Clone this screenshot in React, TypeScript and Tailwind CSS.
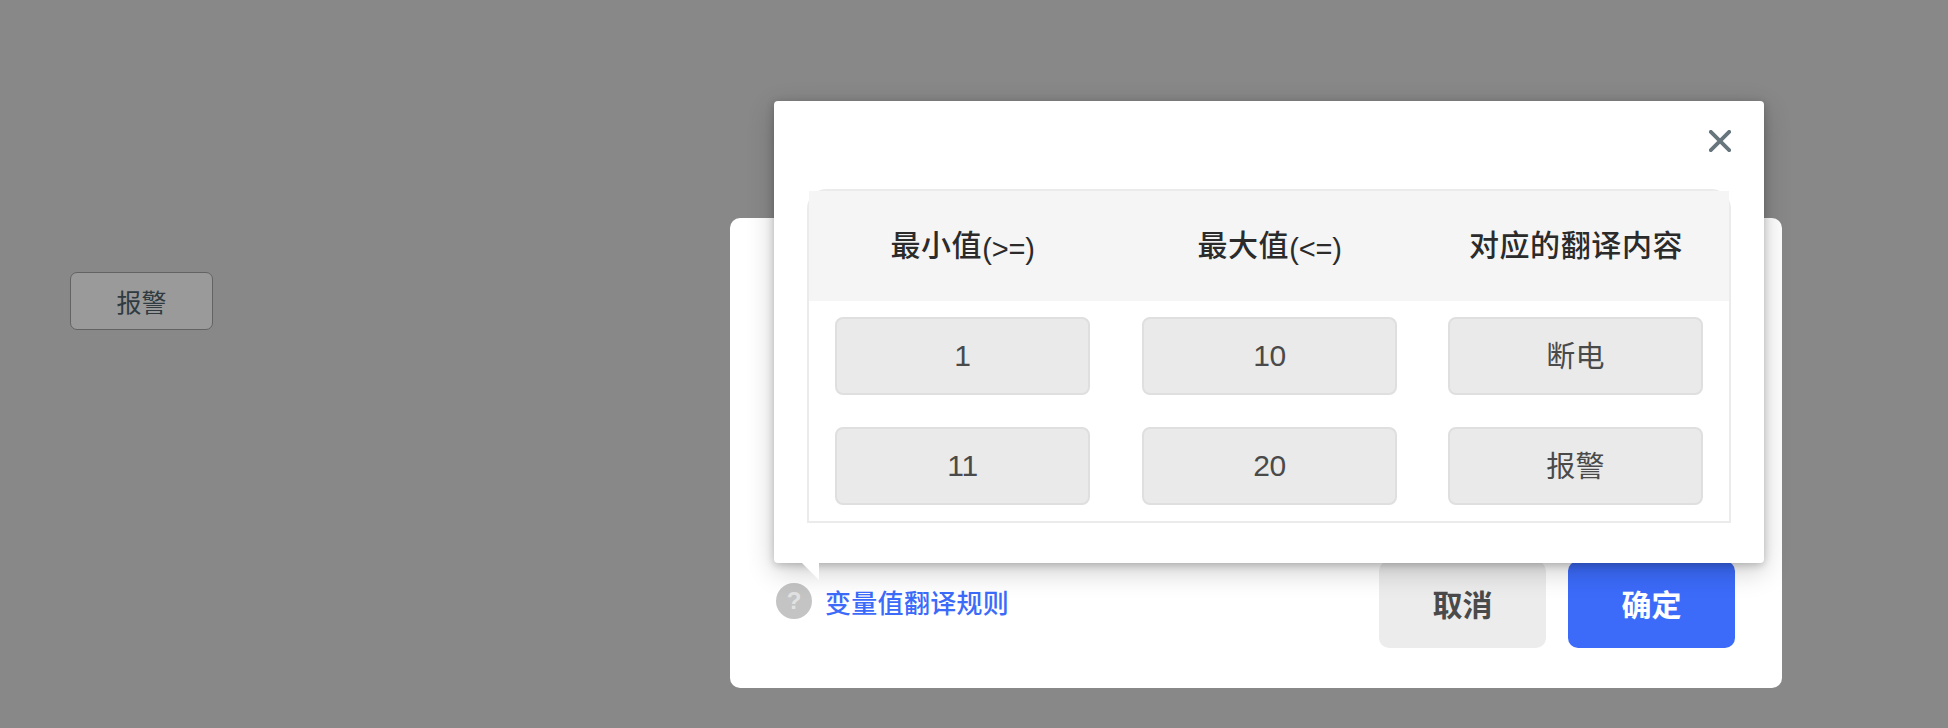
const FONT = "font-['Liberation_Sans','Noto_Sans_CJK_SC',sans-serif]";

const columns = [
  { label: "最小值", suffix: "(>=)" },
  { label: "最大值", suffix: "(<=)" },
  { label: "对应的翻译内容", suffix: "" },
];

const rows = [
  ["1", "10", "断电"],
  ["11", "20", "报警"],
];

function CloseIcon() {
  return (
    <svg className="h-[22px] w-[22px]" viewBox="0 0 22 22" fill="none" stroke="#67757c" strokeWidth={3.8}>
      <path d="M0.5 0.5L21.5 21.5M21.5 0.5L0.5 21.5" />
    </svg>
  );
}

function RulePopover() {
  return (
    <div className="absolute bottom-[125px] left-[44px] h-[462px] w-[990px] rounded-[4px] bg-white px-[33px] shadow-[0_2px_8px_rgba(0,0,0,0.22),0_8px_28px_rgba(0,0,0,0.2)]">
      <div className="flex h-[88px] items-start justify-end pt-[29px]">
        <button type="button" aria-label="关闭">
          <CloseIcon />
        </button>
      </div>

      <div className="rounded-t-[20px] border-2 border-[#ebebeb]">
        <div className="grid h-[110px] grid-cols-[307px_307px_306px] items-center bg-[#f5f5f5] text-center text-[30px] leading-none text-[#2b2b2b]">
          {columns.map((column) => (
            <div key={column.label} className="flex items-center justify-center font-medium">
              <span className="tracking-[0.6px]">{column.label}</span>
              {column.suffix && (
                <span className="pt-1.5 text-[29px] font-normal tracking-[-0.2px]">{column.suffix}</span>
              )}
            </div>
          ))}
        </div>
        {rows.map((row) => (
          <div key={row[0]} className="grid h-[110px] grid-cols-[307px_307px_305px] place-items-center">
            {row.map((value) => (
              <div
                key={value}
                className={`flex h-[78px] w-[255px] items-center justify-center rounded-[8px] border-2 border-[#dfdfdf] bg-[#eaeaea] leading-none text-[#4a4a4a] ${
                  /\d/.test(value) ? "text-[30px] tracking-[-0.4px]" : "pt-[3px] text-[29px] tracking-[0.3px]"
                }`}
              >
                {value}
              </div>
            ))}
          </div>
        ))}
      </div>

      <svg className="absolute top-full left-[28px] h-[17px] w-[17px]" viewBox="0 0 17 17" fill="#fff">
        <path d="M0 0H17V17Z" />
      </svg>
    </div>
  );
}

export default function App() {
  return (
    <div className={`flex h-[728px] w-[1948px] items-start overflow-hidden bg-[#888888] ${FONT}`}>
      <div className="mt-[272px] ml-[70px] flex h-[58px] w-[143px] shrink-0 items-center justify-center rounded-[7px] border border-[#636363] bg-[#9a9a9a] pt-[5px] text-[25px] leading-none text-[#303b41]">
        报警
      </div>

      <div className="relative mt-[218px] ml-[517px] flex h-[470px] w-[1052px] shrink-0 items-end rounded-[10px] bg-white pr-[47px] pb-10 pl-[46px]">
        <div className="mb-[29px] flex h-[36px] items-center gap-[13px]">
          <span className="flex h-[36px] w-[36px] items-center justify-center rounded-full bg-[#c4c4c4] text-[24px] leading-none font-bold text-[#e2e2e2]">
            ?
          </span>
          <span className="pt-[6px] text-[26px] leading-none font-medium tracking-[0.3px] text-[#3c6bfa]">
            变量值翻译规则
          </span>
        </div>
        <div className="ml-auto flex gap-[22px] text-[30px] leading-none font-bold">
          <button type="button" className="h-[87px] w-[167px] rounded-[10px] bg-[#ececec] pt-0.5 text-[#4a4a4a]">
            取消
          </button>
          <button type="button" className="h-[87px] w-[167px] rounded-[10px] bg-[#3c6bfa] pt-0.5 text-white">
            确定
          </button>
        </div>

        <RulePopover />
      </div>
    </div>
  );
}
